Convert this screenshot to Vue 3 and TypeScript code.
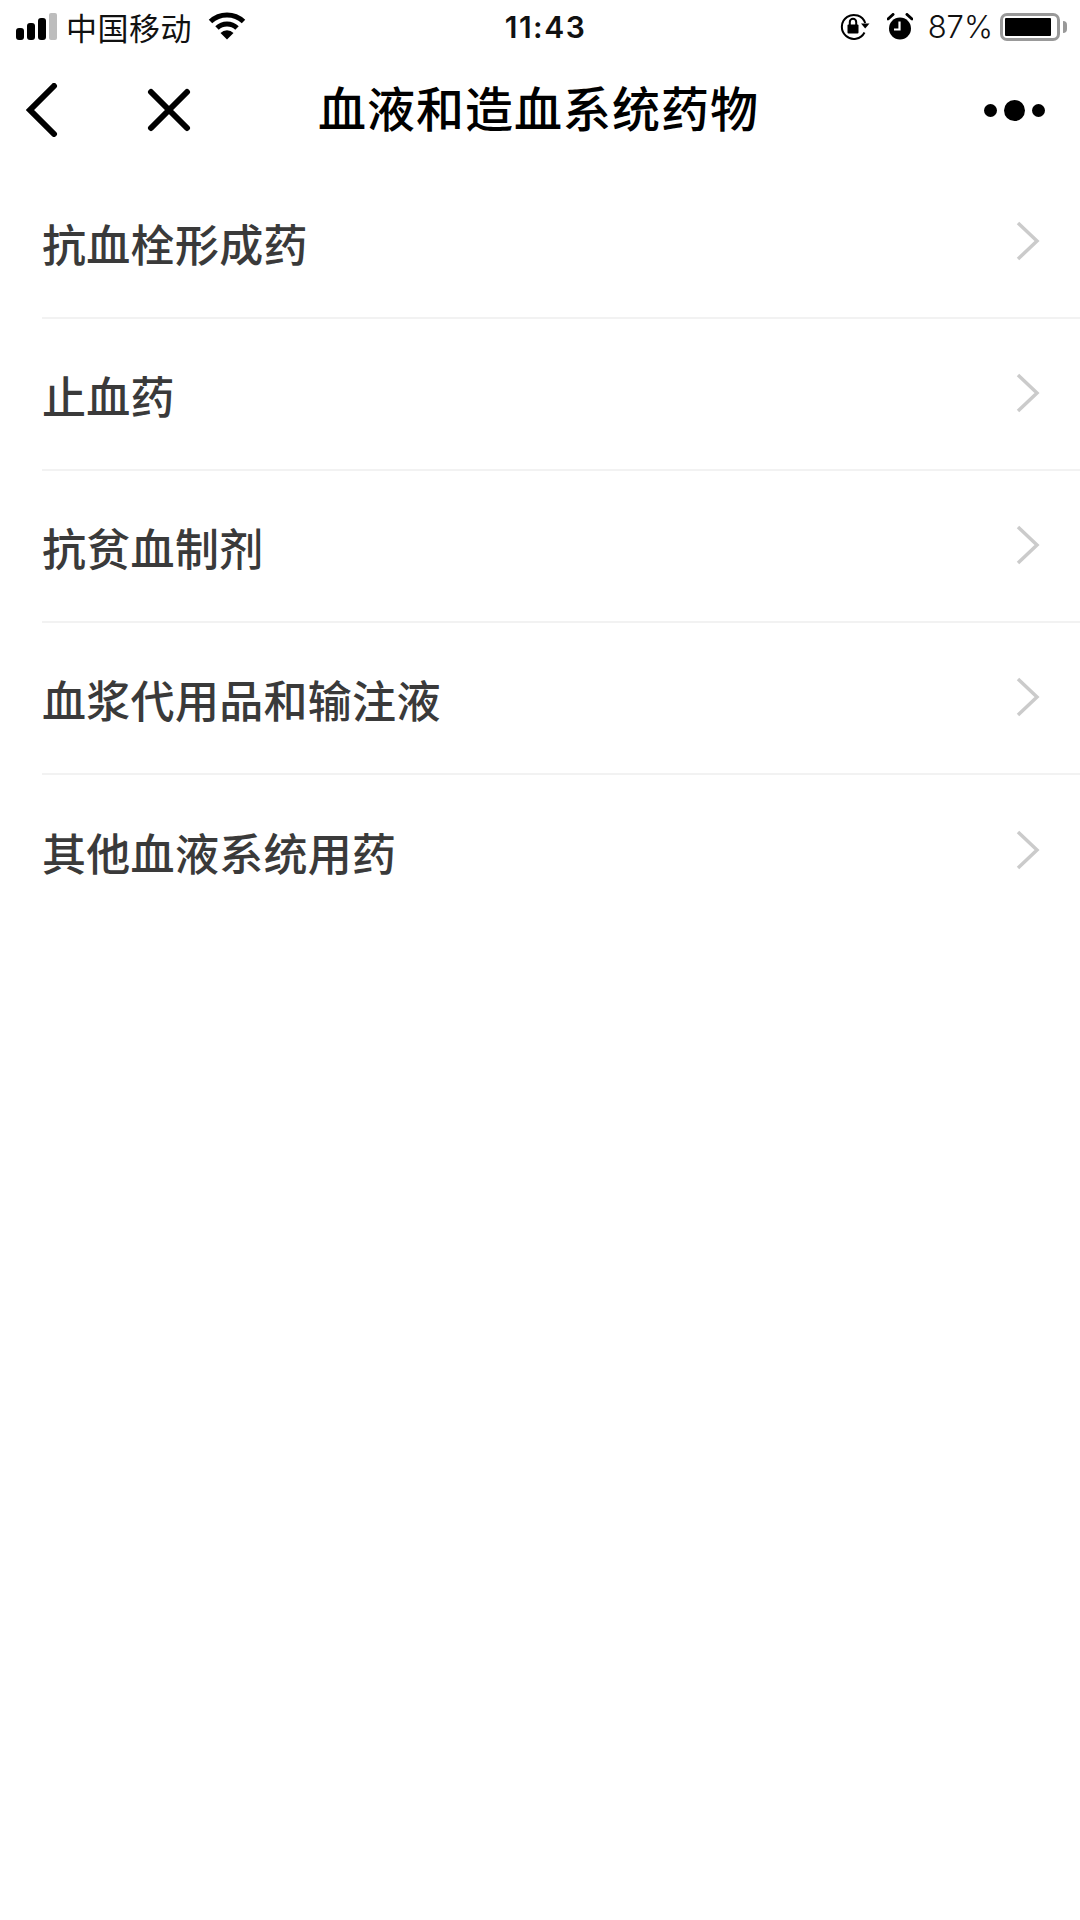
<script setup lang="ts">
const rows: string[] = ['抗血栓形成药', '止血药', '抗贫血制剂', '血浆代用品和输注液', '其他血液系统用药']
</script>

<template>
  <div class="page">
    <header class="status">
      <div class="status-left">
        <svg class="signal" width="42" height="27" viewBox="0 0 42 27">
          <rect x="0" y="15" width="8" height="12" rx="3" fill="#000" />
          <rect x="11" y="10" width="8" height="17" rx="3" fill="#000" />
          <rect x="22" y="5" width="8" height="22" rx="3" fill="#000" />
          <rect x="33" y="0" width="8" height="27" rx="2" fill="#bdbdbd" />
        </svg>
        <span class="carrier">中国移动</span>
        <svg class="wifi" width="38" height="28" viewBox="0 0 38 28">
          <path d="M2.500 9.500 A24 24 0 0 1 35.500 9.500" fill="none" stroke="#000" stroke-width="5" />
          <path d="M9 16 A14.500 14.500 0 0 1 29 16" fill="none" stroke="#000" stroke-width="5" />
          <path d="M12.500 21 A9 9 0 0 1 25.500 21 L19 27.500 Z" fill="#000" />
        </svg>
      </div>
      <div class="time">11:43</div>
      <div class="status-right">
        <svg width="30" height="28" viewBox="0 0 30 28">
          <path d="M24.500 19.500 A12 12 0 1 1 25.200 10" fill="none" stroke="#000" stroke-width="2" />
          <path d="M21 10.500 L29.500 10.500 L25.200 15.500 Z" fill="#000" />
          <rect x="7.500" y="11.500" width="11" height="9" rx="1" fill="#000" />
          <path d="M9.800 12 V9 A3.200 3.200 0 0 1 16.200 9 V12" fill="none" stroke="#000" stroke-width="2" />
        </svg>
        <svg class="alarm" width="26" height="28" viewBox="0 0 26 28">
          <circle cx="13" cy="15.500" r="11" fill="#000" />
          <path d="M12.500 8.500 V16.500 H7" fill="none" stroke="#fff" stroke-width="2.200" />
          <path d="M1 6 L6 1.500" stroke="#000" stroke-width="3" stroke-linecap="round" />
          <path d="M25 6 L20 1.500" stroke="#000" stroke-width="3" stroke-linecap="round" />
        </svg>
        <span class="pct">87%</span>
        <div class="battery"><div class="battery-fill"></div></div>
        <div class="nub"></div>
      </div>
    </header>

    <nav class="nav">
      <div class="nav-left">
        <svg class="back" width="32" height="54" viewBox="0 0 32 54">
          <path d="M28 3 L4 27 L28 51" fill="none" stroke="#000" stroke-width="6" stroke-linecap="round" stroke-linejoin="miter" />
        </svg>
        <svg class="close" width="44" height="44" viewBox="0 0 44 44">
          <path d="M4 4 L40 40 M40 4 L4 40" fill="none" stroke="#000" stroke-width="6" stroke-linecap="round" />
        </svg>
      </div>
      <h1 class="title">血液和造血系统药物</h1>
      <div class="nav-right">
        <span class="dot"></span>
        <span class="dot big"></span>
        <span class="dot"></span>
      </div>
    </nav>

    <ul class="list">
      <li v-for="row in rows" :key="row" class="row">
        <span class="label">{{ row }}</span>
        <svg class="chev" width="24" height="40" viewBox="0 0 24 40">
          <path d="M2 2 L21 20 L2 38" fill="none" stroke="#cbcbcb" stroke-width="3.500" />
        </svg>
      </li>
    </ul>
  </div>
</template>

<style scoped>
.page {
  width: 1080px;
  height: 1920px;
  background: #fff;
  overflow: hidden;
  font-family: "Liberation Sans", "Noto Sans CJK SC", sans-serif;
  color: #000;
}
.status {
  height: 54px;
  display: grid;
  grid-template-columns: 1fr auto 1fr;
  align-items: center;
  padding: 0 13px 0 16px;
}
.status-left {
  display: flex;
  align-items: center;
}
.signal {
  margin-top: -1px;
}
.carrier {
  font-family: "Noto Sans CJK SC", sans-serif;
  font-size: 31px;
  letter-spacing: 0.5px;
  line-height: 40px;
  margin-left: 8px;
  color: #111;
}
.wifi {
  margin-left: 16px;
  margin-top: -2px;
}
.time {
  font-family: Inter, "Liberation Sans", sans-serif;
  font-size: 30px;
  font-weight: 600;
  letter-spacing: 1.5px;
  line-height: 40px;
  margin-left: 8px;
  color: #111;
}
.status-right {
  display: flex;
  align-items: center;
  justify-content: flex-end;
}
.alarm {
  margin-left: 17px;
}
.pct {
  font-family: Inter, "Liberation Sans", sans-serif;
  font-size: 31px;
  font-weight: 300;
  line-height: 40px;
  margin-left: 15px;
  color: #111;
}
.battery {
  width: 60px;
  height: 28px;
  box-sizing: border-box;
  border: 3px solid #999;
  border-radius: 7px;
  margin-left: 7px;
  padding: 2px;
}
.battery-fill {
  width: 46px;
  height: 100%;
  background: #000;
  border-radius: 1px;
}
.nub {
  width: 4px;
  height: 12px;
  background: #999;
  margin-left: 3px;
  border-radius: 0 4px 4px 0;
}
.nav {
  height: 113px;
  display: grid;
  grid-template-columns: 1fr auto 1fr;
  align-items: center;
}
.nav-left {
  display: flex;
  align-items: center;
  padding-left: 26px;
  margin-bottom: 2px;
}
.close {
  margin-left: 89px;
}
.title {
  margin: 0 3px 9px 0;
  font-family: "Noto Sans CJK SC", sans-serif;
  font-size: 48px;
  font-weight: 500;
  letter-spacing: 1px;
  line-height: 64px;
  white-space: nowrap;
}
.nav-right {
  display: flex;
  align-items: center;
  justify-content: flex-end;
  gap: 7px;
  padding-right: 35px;
  margin-bottom: 1px;
}
.dot {
  width: 13px;
  height: 13px;
  border-radius: 50%;
  background: #000;
}
.dot.big {
  width: 21px;
  height: 21px;
}
.list {
  list-style: none;
  margin: 0;
  padding: 0 0 0 42px;
}
.row {
  height: 152px;
  box-sizing: border-box;
  border-bottom: 2px solid #f2f2f2;
  display: flex;
  align-items: center;
  justify-content: space-between;
  padding-right: 40px;
}
.row:last-child {
  border-bottom: 0;
}
.label {
  font-family: "Noto Sans CJK SC", sans-serif;
  font-size: 44px;
  font-weight: 500;
  letter-spacing: 0.3px;
  line-height: 60px;
  color: #3a3a3a;
  margin-top: 1px;
}
.chev {
  margin-top: -2px;
}
</style>
